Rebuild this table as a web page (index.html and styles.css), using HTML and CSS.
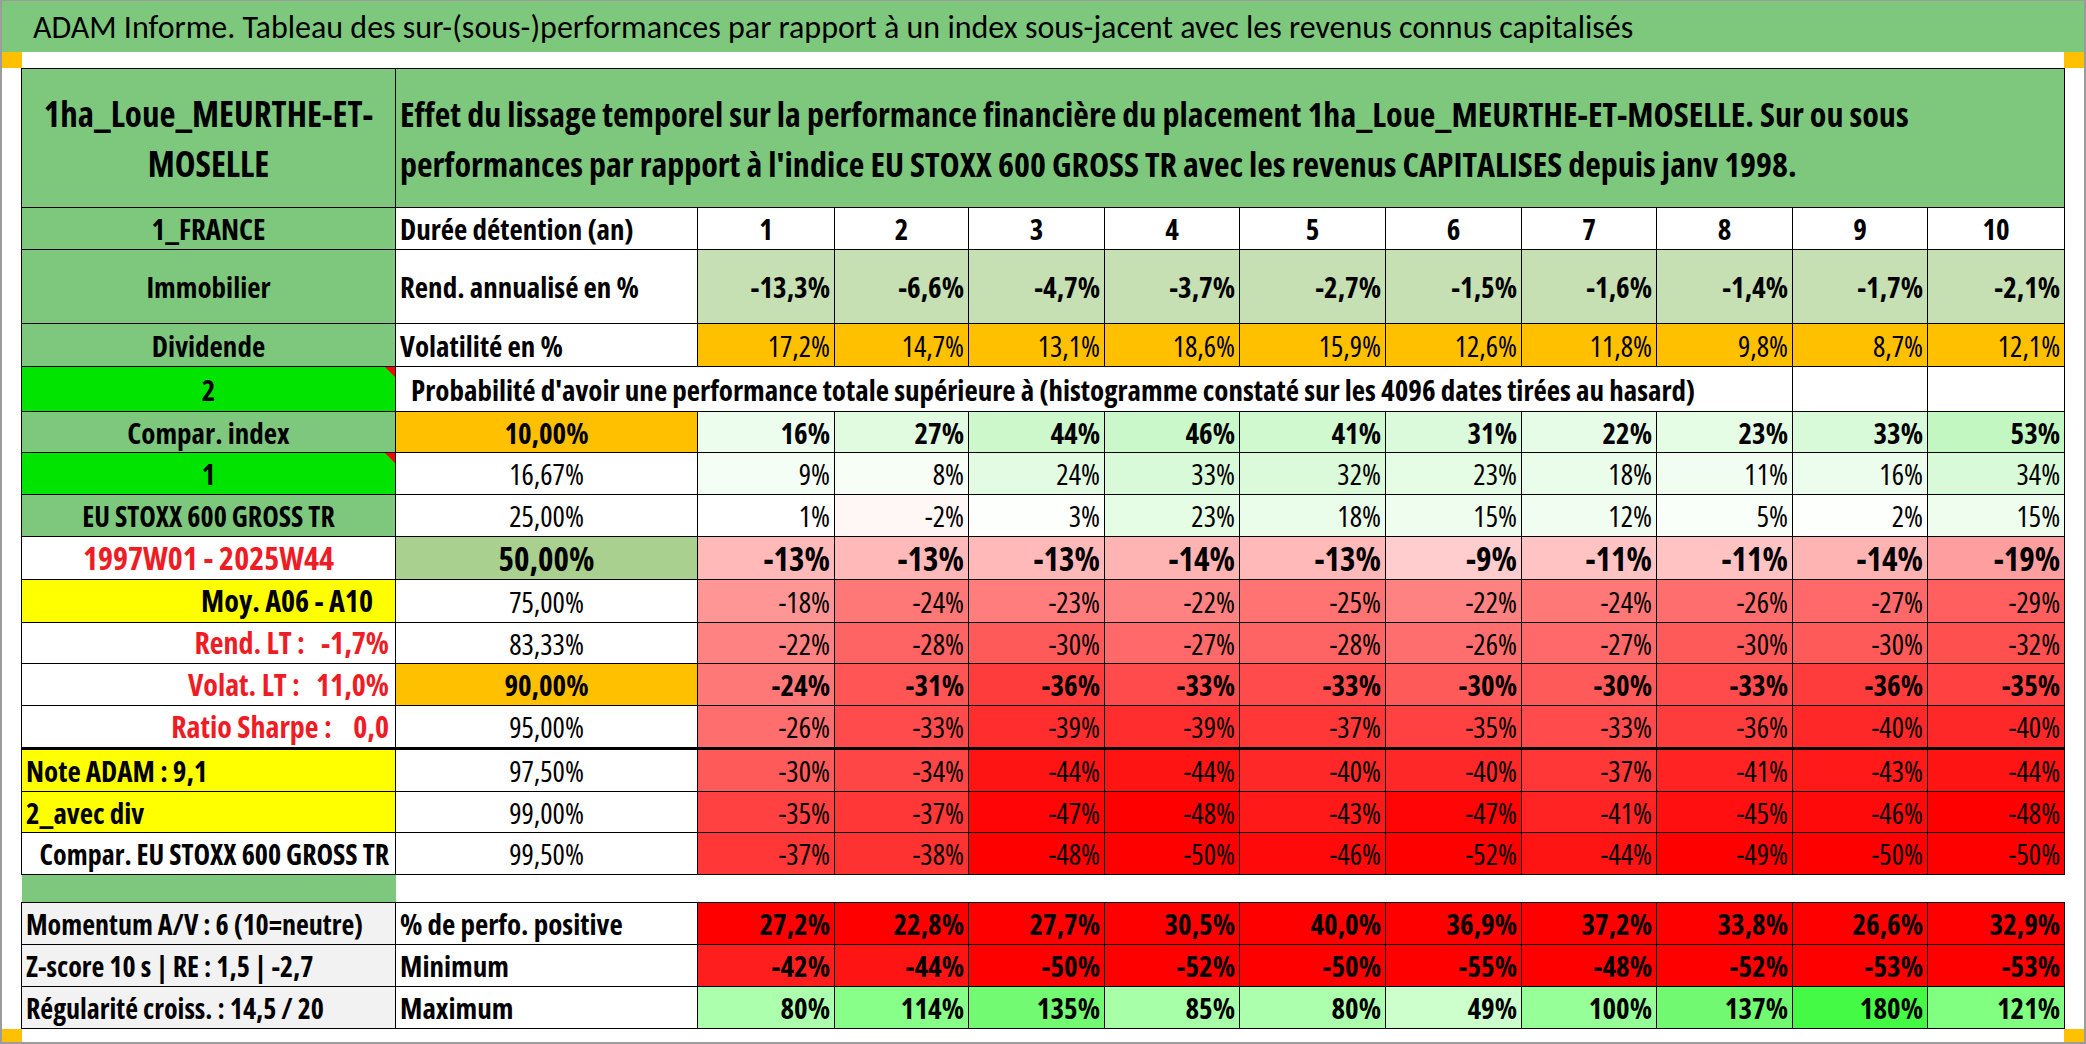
FILE: index.html
```html
<!DOCTYPE html>
<html lang="fr">
<head>
<meta charset="utf-8">
<title>ADAM Informe</title>
<link rel="stylesheet" href="styles.css">
</head>
<body>
<div class="frame">
  <div class="titlebar">ADAM Informe. Tableau des sur-(sous-)performances par rapport à un index sous-jacent avec les revenus connus capitalisés</div>
  <div class="band band-top"><span class="mark"></span><span class="mark"></span></div>
  <div class="sheet">
    <table class="grid">
      <colgroup>
        <col class="c-label"><col class="c-desc">
        <col class="c-n137"><col class="c-n134"><col class="c-n136"><col class="c-n135"><col class="c-n146">
        <col class="c-n136"><col class="c-n135"><col class="c-n136"><col class="c-n135"><col class="c-n137">
      </colgroup>
      <tbody>
        <tr class="row-head">
          <td class="lbl hdr">1ha_Loue_MEURTHE-ET-<br>MOSELLE</td>
          <td class="hdr-desc" colspan="11">Effet du lissage temporel sur la performance financière du placement 1ha_Loue_MEURTHE-ET-MOSELLE. Sur ou sous<br>performances par rapport à l'indice EU STOXX 600 GROSS TR avec les revenus CAPITALISES depuis janv 1998.</td>
        </tr>
        <tr>
          <td class="lbl">1_FRANCE</td>
          <td class="desc">Durée détention (an)</td>
          <td class="yr">1</td><td class="yr">2</td><td class="yr">3</td><td class="yr">4</td><td class="yr">5</td>
          <td class="yr">6</td><td class="yr">7</td><td class="yr">8</td><td class="yr">9</td><td class="yr">10</td>
        </tr>
        <tr class="row-tall">
          <td class="lbl">Immobilier</td>
          <td class="desc">Rend. annualisé en %</td>
          <td class="num b rend">-13,3%</td><td class="num b rend">-6,6%</td><td class="num b rend">-4,7%</td><td class="num b rend">-3,7%</td><td class="num b rend">-2,7%</td>
          <td class="num b rend">-1,5%</td><td class="num b rend">-1,6%</td><td class="num b rend">-1,4%</td><td class="num b rend">-1,7%</td><td class="num b rend">-2,1%</td>
        </tr>
        <tr class="row-43">
          <td class="lbl">Dividende</td>
          <td class="desc">Volatilité en %</td>
          <td class="num vol">17,2%</td><td class="num vol">14,7%</td><td class="num vol">13,1%</td><td class="num vol">18,6%</td><td class="num vol">15,9%</td>
          <td class="num vol">12,6%</td><td class="num vol">11,8%</td><td class="num vol">9,8%</td><td class="num vol">8,7%</td><td class="num vol">12,1%</td>
        </tr>
        <tr class="row-prob">
          <td class="lbl-bright note">2</td>
          <td class="prob" colspan="9">Probabilité d'avoir une performance totale supérieure à (histogramme constaté sur les 4096 dates tirées au hasard)</td>
          <td></td><td></td>
        </tr>
        <tr class="row-41">
          <td class="lbl">Compar. index</td>
          <td class="pct b orange">10,00%</td>
          <td class="num b" style="background:#EDFDED">16%</td><td class="num b" style="background:#E0FBE0">27%</td><td class="num b" style="background:#CCF8CC">44%</td><td class="num b" style="background:#CAF8CA">46%</td><td class="num b" style="background:#D0F9D0">41%</td>
          <td class="num b" style="background:#DBFADB">31%</td><td class="num b" style="background:#E6FCE6">22%</td><td class="num b" style="background:#E5FCE5">23%</td><td class="num b" style="background:#D9FAD9">33%</td><td class="num b" style="background:#C2F7C2">53%</td>
        </tr>
        <tr>
          <td class="lbl-bright note">1</td>
          <td class="pct">16,67%</td>
          <td class="num" style="background:#F5FEF5">9%</td><td class="num" style="background:#F6FEF6">8%</td><td class="num" style="background:#E3FBE3">24%</td><td class="num" style="background:#D9FAD9">33%</td><td class="num" style="background:#DAFADA">32%</td>
          <td class="num" style="background:#E5FCE5">23%</td><td class="num" style="background:#EAFCEA">18%</td><td class="num" style="background:#F2FDF2">11%</td><td class="num" style="background:#EDFDED">16%</td><td class="num" style="background:#D8FAD8">34%</td>
        </tr>
        <tr>
          <td class="lbl lbl-small">EU STOXX 600 GROSS TR</td>
          <td class="pct">25,00%</td>
          <td class="num" style="background:#FEFFFE">1%</td><td class="num" style="background:#FFF6F6">-2%</td><td class="num" style="background:#FCFFFC">3%</td><td class="num" style="background:#E5FCE5">23%</td><td class="num" style="background:#EAFCEA">18%</td>
          <td class="num" style="background:#EEFDEE">15%</td><td class="num" style="background:#F1FDF1">12%</td><td class="num" style="background:#F9FFF9">5%</td><td class="num" style="background:#FDFFFD">2%</td><td class="num" style="background:#EEFDEE">15%</td>
        </tr>
        <tr class="row-43">
          <td class="period">1997W01 - 2025W44</td>
          <td class="pct b big lgreen">50,00%</td>
          <td class="num b big" style="background:#FFB9B9">-13%</td><td class="num b big" style="background:#FFB9B9">-13%</td><td class="num b big" style="background:#FFB9B9">-13%</td><td class="num b big" style="background:#FFB4B4">-14%</td><td class="num b big" style="background:#FFB9B9">-13%</td>
          <td class="num b big" style="background:#FFCDCD">-9%</td><td class="num b big" style="background:#FFC3C3">-11%</td><td class="num b big" style="background:#FFC3C3">-11%</td><td class="num b big" style="background:#FFB4B4">-14%</td><td class="num b big" style="background:#FF9E9E">-19%</td>
        </tr>
        <tr class="row-43">
          <td class="moy">Moy. A06 - A10</td>
          <td class="pct">75,00%</td>
          <td class="num" style="background:#FF9696">-18%</td><td class="num" style="background:#FF7878">-24%</td><td class="num" style="background:#FF7D7D">-23%</td><td class="num" style="background:#FF8282">-22%</td><td class="num" style="background:#FF7373">-25%</td>
          <td class="num" style="background:#FF8282">-22%</td><td class="num" style="background:#FF7878">-24%</td><td class="num" style="background:#FF6E6E">-26%</td><td class="num" style="background:#FF6969">-27%</td><td class="num" style="background:#FF5F5F">-29%</td>
        </tr>
        <tr class="row-41">
          <td class="stat red">Rend. LT :   -1,7%</td>
          <td class="pct">83,33%</td>
          <td class="num" style="background:#FF8282">-22%</td><td class="num" style="background:#FF6464">-28%</td><td class="num" style="background:#FF5A5A">-30%</td><td class="num" style="background:#FF6969">-27%</td><td class="num" style="background:#FF6464">-28%</td>
          <td class="num" style="background:#FF6E6E">-26%</td><td class="num" style="background:#FF6969">-27%</td><td class="num" style="background:#FF5A5A">-30%</td><td class="num" style="background:#FF5A5A">-30%</td><td class="num" style="background:#FF5050">-32%</td>
        </tr>
        <tr>
          <td class="stat red">Volat. LT :   11,0%</td>
          <td class="pct b orange">90,00%</td>
          <td class="num b" style="background:#FF7878">-24%</td><td class="num b" style="background:#FF5555">-31%</td><td class="num b" style="background:#FF3C3C">-36%</td><td class="num b" style="background:#FF4B4B">-33%</td><td class="num b" style="background:#FF4B4B">-33%</td>
          <td class="num b" style="background:#FF5A5A">-30%</td><td class="num b" style="background:#FF5A5A">-30%</td><td class="num b" style="background:#FF4B4B">-33%</td><td class="num b" style="background:#FF3C3C">-36%</td><td class="num b" style="background:#FF4141">-35%</td>
        </tr>
        <tr class="row-43">
          <td class="stat red">Ratio Sharpe :    0,0</td>
          <td class="pct">95,00%</td>
          <td class="num" style="background:#FF6E6E">-26%</td><td class="num" style="background:#FF4B4B">-33%</td><td class="num" style="background:#FF2D2D">-39%</td><td class="num" style="background:#FF2D2D">-39%</td><td class="num" style="background:#FF3737">-37%</td>
          <td class="num" style="background:#FF4141">-35%</td><td class="num" style="background:#FF4B4B">-33%</td><td class="num" style="background:#FF3C3C">-36%</td><td class="num" style="background:#FF2828">-40%</td><td class="num" style="background:#FF2828">-40%</td>
        </tr>
        <tr class="row-43 row-thick">
          <td class="note-lbl yellow">Note ADAM : 9,1</td>
          <td class="pct">97,50%</td>
          <td class="num" style="background:#FF5A5A">-30%</td><td class="num" style="background:#FF4646">-34%</td><td class="num" style="background:#FF1414">-44%</td><td class="num" style="background:#FF1414">-44%</td><td class="num" style="background:#FF2828">-40%</td>
          <td class="num" style="background:#FF2828">-40%</td><td class="num" style="background:#FF3737">-37%</td><td class="num" style="background:#FF2323">-41%</td><td class="num" style="background:#FF1919">-43%</td><td class="num" style="background:#FF1414">-44%</td>
        </tr>
        <tr class="row-41">
          <td class="note-lbl yellow">2_avec div</td>
          <td class="pct">99,00%</td>
          <td class="num" style="background:#FF4141">-35%</td><td class="num" style="background:#FF3737">-37%</td><td class="num" style="background:#FF0505">-47%</td><td class="num" style="background:#FF0000">-48%</td><td class="num" style="background:#FF1919">-43%</td>
          <td class="num" style="background:#FF0505">-47%</td><td class="num" style="background:#FF2323">-41%</td><td class="num" style="background:#FF0F0F">-45%</td><td class="num" style="background:#FF0A0A">-46%</td><td class="num" style="background:#FF0000">-48%</td>
        </tr>
        <tr>
          <td class="stat stat-small">Compar. EU STOXX 600 GROSS TR</td>
          <td class="pct">99,50%</td>
          <td class="num" style="background:#FF3737">-37%</td><td class="num" style="background:#FF3232">-38%</td><td class="num" style="background:#FF0000">-48%</td><td class="num" style="background:#FF0000">-50%</td><td class="num" style="background:#FF0A0A">-46%</td>
          <td class="num" style="background:#FF0000">-52%</td><td class="num" style="background:#FF1414">-44%</td><td class="num" style="background:#FF0000">-49%</td><td class="num" style="background:#FF0000">-50%</td><td class="num" style="background:#FF0000">-50%</td>
        </tr>
        <tr class="row-gap">
          <td class="gap-green"></td>
          <td class="gap-blank" colspan="11"></td>
        </tr>
        <tr>
          <td class="info">Momentum A/V : 6 (10=neutre)</td>
          <td class="desc">% de perfo. positive</td>
          <td class="num b red-bg">27,2%</td><td class="num b red-bg">22,8%</td><td class="num b red-bg">27,7%</td><td class="num b red-bg">30,5%</td><td class="num b red-bg">40,0%</td>
          <td class="num b red-bg">36,9%</td><td class="num b red-bg">37,2%</td><td class="num b red-bg">33,8%</td><td class="num b red-bg">26,6%</td><td class="num b red-bg">32,9%</td>
        </tr>
        <tr>
          <td class="info">Z-score 10 s | RE : 1,5 | -2,7</td>
          <td class="desc">Minimum</td>
          <td class="num b" style="background:#FF1E1E">-42%</td><td class="num b" style="background:#FF1414">-44%</td><td class="num b red-bg">-50%</td><td class="num b red-bg">-52%</td><td class="num b red-bg">-50%</td>
          <td class="num b red-bg">-55%</td><td class="num b red-bg">-48%</td><td class="num b red-bg">-52%</td><td class="num b red-bg">-53%</td><td class="num b red-bg">-53%</td>
        </tr>
        <tr>
          <td class="info">Régularité croiss. : 14,5 / 20</td>
          <td class="desc">Maximum</td>
          <td class="num b" style="background:#ACFFAC">80%</td><td class="num b" style="background:#88FF88">114%</td><td class="num b" style="background:#73FA73">135%</td><td class="num b" style="background:#A7FFA7">85%</td><td class="num b" style="background:#ACFFAC">80%</td>
          <td class="num b" style="background:#CCFFCC">49%</td><td class="num b" style="background:#97FF97">100%</td><td class="num b" style="background:#71FA71">137%</td><td class="num b" style="background:#44FA44">180%</td><td class="num b" style="background:#81FF81">121%</td>
        </tr>
      </tbody>
    </table>
  </div>
  <div class="band band-bottom"><span class="mark"></span><span class="mark"></span></div>
</div>
</body>
</html>
```
FILE: styles.css
```css
* { box-sizing: border-box; }

body {
  margin: 0;
  background: #ffffff;
  color: #000000;
  font-family: "Open Sans", "Carlito", sans-serif;
  font-stretch: 75%;
}

.frame {
  width: 2086px;
  height: 1044px;
  border: 2px solid #9c9c9c;
  border-top-width: 1px;
  display: flex;
  flex-direction: column;
  overflow: hidden;
}

.titlebar {
  height: 51px;
  flex: none;
  background: #7ec87e;
  padding-left: 31px;
  padding-top: 2px;
  display: flex;
  align-items: center;
  font-family: "Carlito", "Open Sans", sans-serif;
  font-stretch: 100%;
  font-size: 32px;
  white-space: nowrap;
}

.band {
  flex: none;
  display: flex;
  justify-content: space-between;
}
.band-top { height: 16px; }
.band-bottom { height: 14px; }
.mark { width: 20px; background: #ffc000; }

.sheet {
  flex: none;
  padding-left: 19px;
}

.grid {
  border-collapse: collapse;
  table-layout: fixed;
  width: 2043px;
}

.c-label { width: 374px; }
.c-desc { width: 302px; }
.c-n134 { width: 134px; }
.c-n135 { width: 135px; }
.c-n136 { width: 136px; }
.c-n137 { width: 137px; }
.c-n146 { width: 146px; }

.grid tr { height: 42px; }
.grid .row-head { height: 139px; }
.grid .row-tall { height: 74px; }
.grid .row-43 { height: 43px; }
.grid .row-41 { height: 41px; }
.grid .row-prob { height: 45px; }
.grid .row-gap { height: 28px; }

.grid td {
  border: 1px solid #000000;
  padding: 0 4px;
  font-size: 29px;
  line-height: 1;
  vertical-align: middle;
  white-space: nowrap;
  background: #ffffff;
  overflow: visible;
}

.row-thick td { border-top: 3px solid #000000; }

/* first column labels */
.grid .lbl {
  background: #7ec87e;
  text-align: center;
  font-weight: bold;
}
.grid .lbl-small { font-size: 28px; }
.grid .lbl-bright {
  background: #00e400;
  text-align: center;
  font-weight: bold;
}
.grid .hdr {
  font-size: 35px;
  line-height: 50px;
  padding-top: 2px;
}
.grid .hdr-desc {
  background: #7ec87e;
  font-size: 34px;
  line-height: 50px;
  font-weight: bold;
  padding-left: 4px;
  padding-top: 2px;
}
.grid .period {
  color: #ee1c25;
  font-weight: bold;
  text-align: center;
  font-size: 32px;
}
.grid .moy {
  background: #ffff00;
  font-weight: bold;
  text-align: right;
  padding-right: 22px;
  font-size: 30px;
}
.grid .stat {
  font-weight: bold;
  text-align: right;
  padding-right: 6px;
  white-space: pre;
  font-size: 30px;
}
.grid .stat-small { font-size: 28px; }
.grid .red { color: #ee1c25; }
.grid .note-lbl {
  font-weight: bold;
  text-align: left;
  padding-left: 4px;
}
.grid .yellow { background: #ffff00; }
.grid .info {
  background: #f2f2f2;
  font-weight: bold;
  padding-left: 4px;
  font-size: 28px;
}

/* note indicators (comment triangles) */
.grid .note { position: relative; }
.grid .note::after {
  content: "";
  position: absolute;
  top: 0;
  right: 0;
  border-top: 10px solid #ff0000;
  border-left: 10px solid transparent;
}

/* second column */
.grid .desc {
  font-weight: bold;
  text-align: left;
  padding-left: 4px;
}
.grid .prob {
  font-weight: bold;
  padding-left: 15px;
}
.grid .pct { text-align: center; }
.grid .orange { background: #ffc000; }
.grid .lgreen { background: #a9d08e; }

/* value cells */
.grid .yr {
  text-align: center;
  font-weight: bold;
}
.grid .num {
  text-align: right;
  padding-right: 4px;
}
.grid .b { font-weight: bold; }
.grid .big { font-size: 33px; }
.grid .rend { background: #c6e0b4; }
.grid .vol { background: #ffc000; }
.grid .red-bg { background: #ff0000; }

/* spacer row */
.grid .gap-green {
  background: #7ec87e;
  border-left: none;
  border-right: none;
  border-bottom: none;
}
.grid .gap-blank {
  border-left: none;
  border-right: none;
}
```
